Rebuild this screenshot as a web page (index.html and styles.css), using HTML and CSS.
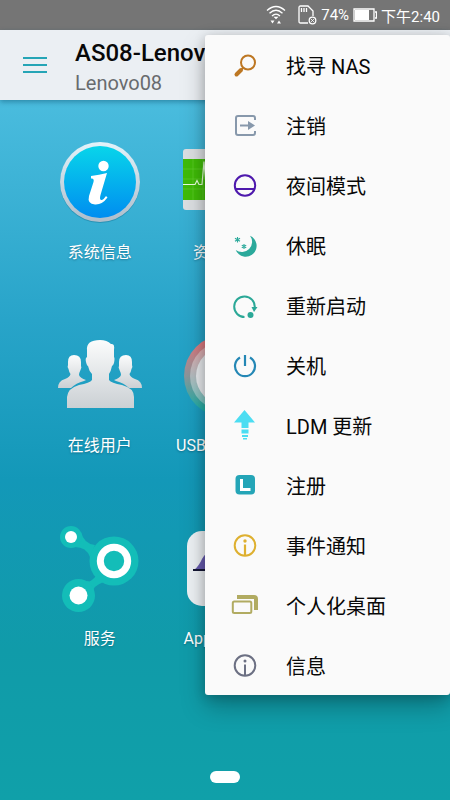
FILE: index.html
```html
<!DOCTYPE html>
<html lang="zh-CN">
<head>
  <meta charset="UTF-8" />
  <meta name="viewport" content="width=device-width, initial-scale=1.0"/>
  <title>AS08-Lenovo</title>
  <link rel="stylesheet" href="styles.css">
</head>
<body>
  <div class="status-bar">
    <svg class="wifi" width="20" height="20" viewBox="0 0 20 20" fill="none" stroke="#fff" stroke-width="1.3">
      <path d="M1 5.500Q10-2.500 19 5.500M3.500 8.300Q10 2.300 16.500 8.300M6 11Q10 7.300 14 11"/>
      <path d="M7.500 11.800h5L10 14.300zM4.500 15.500h4l-2 3zM11 18.500h4l-2-3z" fill="#fff" stroke="none"/>
    </svg>
    <svg class="sd" width="20" height="20" viewBox="0 0 20 20" fill="none" stroke="#fff" stroke-width="1.300">
      <path d="M11 18H3.500Q2 18 2 16.500V2.500Q2 1 3.500 1H11l5 5v5"/>
      <path d="M4.500 3v4M7 3v4M9.500 3v4"/>
      <circle cx="15.500" cy="15.500" r="3.300"/>
      <path d="M14.200 14.200l2.600 2.600M16.800 14.200l-2.600 2.600" stroke-width="1"/>
    </svg>
    <span>74%</span>
    <svg class="battery" width="24" height="16" viewBox="0 0 24 16">
      <path d="M1 2h20v12H1zM22 5h1.500v6H22" fill="none" stroke="#fff" stroke-width="1.300"/>
      <path d="M2 3h14v10H2z" fill="#fff"/>
    </svg>
    <span>下午2:40</span>
  </div>

  <header class="app-header">
    <button class="menu-toggle" aria-label="菜单">
      <svg width="24" height="16" viewBox="0 0 24 16"><path d="M0 1h24M0 8h24M0 15h24" stroke="#25a5b6" stroke-width="2"/></svg>
    </button>
    <div class="device">
      <h1>AS08-Lenovo08</h1>
      <p>Lenovo08</p>
    </div>
  </header>

  <main class="apps">
    <button class="app">
      <svg width="90" height="90" viewBox="0 0 90 90">
        <defs>
          <linearGradient id="ring" x2="0" y2="1"><stop stop-color="#e2f3fa"/><stop offset="1" stop-color="#aebdcb"/></linearGradient>
          <linearGradient id="blue" x2="0" y2="1"><stop stop-color="#08d5ea"/><stop offset="1" stop-color="#008df0"/></linearGradient>
        </defs>
        <circle cx="45" cy="46" r="40" fill="#17779a" opacity=".5"/>
        <circle cx="45" cy="45" r="40" fill="url(#ring)"/>
        <circle cx="45" cy="45" r="36" fill="url(#blue)"/>
        <circle cx="48.500" cy="29" r="5.200" fill="#fff"/>
        <path d="M36 39Q44 38 52 36L45.500 58Q44 63.500 47 63Q49 62 51 59L52.500 60.500Q47 68 40 67.500Q32 67 34 59L38.500 45Q39.500 41 36 41.500z" fill="#fff"/>
      </svg>
      <span>系统信息</span>
    </button>
    <button class="app">
      <svg width="90" height="90" viewBox="0 0 90 90">
        <rect x="3" y="12" width="84" height="61" rx="3" fill="#dcdfe2"/>
        <path d="M3 22h84v41H3z" fill="#3fbb08"/>
        <path d="M13 22v41M23 22v41M33 22v41M43 22v41M3 32h84M3 42h84M3 52h84" stroke="#63cf31" stroke-width=".6"/>
        <path d="M3 47.500h12l2-4 2 4h3l2-23 3 35 3-12h57" fill="none" stroke="#e6ffdb" stroke-width="1.200"/>
      </svg>
      <span>资源监控</span>
    </button>
    <button class="app app-hidden" aria-hidden="true" tabindex="-1"></button>

    <button class="app">
      <svg width="90" height="90" viewBox="0 0 90 90">
        <defs>
          <linearGradient id="people" x2="0" y2="1"><stop stop-color="#fbfcfc"/><stop offset="1" stop-color="#cbd0d4"/></linearGradient>
        </defs>
        <g fill="url(#people)" transform="translate(0 7)">
          <path d="M19 18Q26 18 26 25V29Q27 30 25.500 33Q24 36 24 38Q25 41 31 43L29 44Q21 46 16 51H3Q3 44 10 42Q15 40 15.500 37Q14 35 13.500 32Q12 30 13 28V25Q13 18 19 18z"/>
          <path d="M71 18Q64 18 64 25V29Q63 30 64.500 33Q66 36 66 38Q65 41 59 43L61 44Q69 46 74 51H87Q87 44 80 42Q75 40 74.500 37Q76 35 76.500 32Q78 30 77 28V25Q77 18 71 18z"/>
          <path d="M45 3Q52 3 56 7Q60 6 59 13V20Q60 21 59 26Q58 29 57 29Q56 34 54 37V43Q56 46 67 48Q79 51 79 60V71H12V60Q13 51 24 48Q35 46 37 43V37Q34 34 33 29Q32 29 31 25Q30 21 32 20V13Q31 3 45 3z"/>
        </g>
      </svg>
      <span>在线用户</span>
    </button>
    <button class="app">
      <svg width="90" height="90" viewBox="0 0 90 90">
        <defs>
          <linearGradient id="dial" x2="0" y2="1"><stop stop-color="#f67379"/><stop offset=".5" stop-color="#8a969b"/><stop offset="1" stop-color="#09b9ac"/></linearGradient>
        </defs>
        <circle cx="45" cy="46" r="41" fill="url(#dial)"/>
        <circle cx="45" cy="46" r="35" fill="#fff" opacity=".35"/>
        <circle cx="45" cy="46" r="29" fill="#e8ebee"/>
      </svg>
      <span>USB 外接装置</span>
    </button>
    <button class="app app-hidden" aria-hidden="true" tabindex="-1"></button>

    <button class="app">
      <svg width="90" height="90" viewBox="0 0 90 90">
        <g fill="#13bdb8">
          <path d="M26 9Q29 21 40 22L35 34Q31 23 18 24zM33 58Q35 60 41 53L49 59Q37 63 38 70L26 57Q31 59 33 58z"/>
          <circle cx="16" cy="14" r="11"/>
          <circle cx="59" cy="38" r="24.500"/>
          <circle cx="23.500" cy="72.500" r="16.500"/>
        </g>
        <circle cx="16" cy="14" r="6" fill="#fff"/>
        <circle cx="23.500" cy="72.500" r="9" fill="#fff"/>
        <circle cx="59" cy="38" r="13.700" fill="none" stroke="#fff" stroke-width="7"/>
      </svg>
      <span>服务</span>
    </button>
    <button class="app">
      <svg width="90" height="90" viewBox="0 0 90 90">
        <rect x="7" y="8" width="76" height="75" rx="15" fill="#edf1f4"/>
        <path d="M14 47Q19 43 22 36Q26 29 34 25V47H14z" fill="#675baf"/>
        <path d="M13 47h64" stroke="#151735" stroke-width="2"/>
      </svg>
      <span>App Central</span>
    </button>
    <button class="app app-hidden" aria-hidden="true" tabindex="-1"></button>
  </main>

  <nav class="dropdown">
    <button>
      <svg viewBox="0 0 30 30" fill="none" stroke="#bd7723"><circle cx="18" cy="12.500" r="7" stroke-width="2"/><path d="M13 18l-2 2" stroke-width="2"/><path d="M11 20l-4.500 4.500" stroke-width="4" stroke-linecap="round"/></svg>
      找寻 NAS
    </button>
    <button>
      <svg viewBox="0 0 30 30" fill="none" stroke="#8798ab" stroke-width="2"><path d="M25 10V8Q25 6 23 6H8Q6 6 6 8v15q0 2 2 2h15q2 0 2-2v-2M10 15.500h10"/><path d="M18 11l7 4.500-7 4.500z" fill="#8798ab" stroke="none"/></svg>
      注销
    </button>
    <button>
      <svg viewBox="0 0 30 30" fill="none" stroke="#4e19ad" stroke-width="2"><circle cx="15" cy="15.500" r="10.200"/><path d="M5.500 19h19"/></svg>
      夜间模式
    </button>
    <button>
      <svg viewBox="0 0 30 30"><path d="M20 5.700A10.900 10.900 0 1 1 5.700 20A10.200 10.200 0 0 0 20 5.700z" fill="#2ba99b"/><path d="M7.500 7v5.500M5 8.300l5 3M10 8.300l-5 3M14 14v5M11.800 15.200l4.400 2.600M16.200 15.200l-4.400 2.600" stroke="#2ba99b" stroke-width="1.100"/></svg>
      休眠
    </button>
    <button>
      <svg viewBox="0 0 30 30" fill="none" stroke="#2ba897" stroke-width="2"><path d="M14.500 27A10.300 10.300 0 1 1 24.800 17"/><path d="M21.500 17h6l-3.500 5z" fill="#2ba897" stroke="none"/><circle cx="20.500" cy="25" r="3" fill="#2ba897" stroke="none"/></svg>
      重新启动
    </button>
    <button>
      <svg viewBox="0 0 30 30" fill="none" stroke="#2487b5" stroke-width="2.200"><path d="M10 7.500A10 10 0 1 0 20 7.500M15 5v11"/></svg>
      关机
    </button>
    <button>
      <svg viewBox="0 0 30 30" fill="#4cddf2"><path d="M14.500 0L25 12.500h-6.500V18h-7v-5.500H4zM11.500 19.500h7v4h-7zM12 25h6v2h-6zM13 28h4v1.500h-4z"/></svg>
      LDM 更新
    </button>
    <button>
      <svg viewBox="0 0 30 30"><rect x="5.500" y="5" width="19.500" height="19.500" rx="4" fill="#24a5b7"/><path d="M11.500 9v10.500h9" fill="none" stroke="#fff" stroke-width="3"/></svg>
      注册
    </button>
    <button>
      <svg viewBox="0 0 30 30"><circle cx="15" cy="15.500" r="10.300" fill="none" stroke="#deb030" stroke-width="2"/><circle cx="15" cy="11" r="1.700" fill="#deb030"/><path d="M15 14.500v11" stroke="#deb030" stroke-width="2.200"/></svg>
      事件通知
    </button>
    <button>
      <svg viewBox="0 0 30 30" fill="none" stroke="#b1ab61"><path d="M7 7h17q2 0 2 2v11" stroke-width="4"/><rect x="2.800" y="11.500" width="18.500" height="11.500" rx="1.500" fill="#fafafa" stroke-width="2"/></svg>
      个人化桌面
    </button>
    <button>
      <svg viewBox="0 0 30 30"><circle cx="15" cy="15.500" r="10.300" fill="none" stroke="#6c7083" stroke-width="2"/><circle cx="15" cy="11" r="1.500" fill="#6c7083"/><path d="M15 14.500v11" stroke="#6c7083" stroke-width="2"/></svg>
      信息
    </button>
  </nav>

  <footer class="pager"><span></span></footer>
</body>
</html>
```

FILE: styles.css
```css
* {
  box-sizing: border-box;
}

body {
  margin: 0;
  min-height: 100vh;
  position: relative;
  overflow-x: hidden;
  display: flex;
  flex-direction: column;
  font-family: Roboto, "Noto Sans CJK SC", sans-serif;
  background: linear-gradient(#4abcde 100px, #28a4c9 320px, #1398b8 480px, #109ba9 650px, #10a0a9);
}

button {
  border: none;
  padding: 0;
  background: none;
  font-family: inherit;
  cursor: pointer;
}

.status-bar {
  height: 30px;
  padding-right: 10px;
  display: flex;
  align-items: center;
  justify-content: flex-end;
  background: #757575;
  color: #fff;
  font-size: 15px;
}

.wifi {
  margin-right: 11px;
}

.sd {
  margin-right: 4px;
}

.battery {
  margin: 0 4px;
}

.app-header {
  height: 70px;
  padding-left: 23px;
  display: flex;
  align-items: center;
  gap: 28px;
  background: #ebeff3;
  box-shadow: 0 2px 5px rgba(0, 60, 90, 0.4);
}

.menu-toggle {
  height: 40px;
}

.menu-toggle svg {
  display: block;
}

.device {
  padding-top: 4px;
}

.device h1,
.device p {
  margin: 0;
  white-space: nowrap;
}

.device h1 {
  color: #080808;
  font-size: 24px;
  font-weight: 500;
  line-height: 32px;
}

.device p {
  color: #686b6e;
  font-size: 20px;
  line-height: 28px;
}

.apps {
  flex: 1;
  display: grid;
  grid-template-columns: repeat(3, 1fr);
  align-content: start;
  row-gap: 65px;
  padding: 37px 37px 0;
}

.app {
  display: flex;
  flex-direction: column;
  align-items: center;
  gap: 14px;
  color: #fff;
  font-size: 16px;
  line-height: 24px;
  white-space: nowrap;
  text-shadow: 0 1px 2px rgba(0, 50, 70, 0.4);
}

.app-hidden {
  visibility: hidden;
}

/* menu opens over the header and the app grid */
.dropdown {
  position: absolute;
  top: 35px;
  right: 0;
  width: 245px;
  display: flex;
  flex-direction: column;
  background: #fafafa;
  border-radius: 3px;
  box-shadow: 0 12px 24px rgba(0, 0, 0, 0.25), 0 2px 12px rgba(0, 0, 0, 0.2);
}

.dropdown button {
  height: 60px;
  padding-left: 25px;
  display: flex;
  align-items: center;
  gap: 26px;
  color: #080808;
  font-size: 20px;
}

.dropdown svg {
  width: 30px;
  height: 30px;
}

.pager {
  display: flex;
  justify-content: center;
  padding-bottom: 17px;
}

.pager span {
  width: 30px;
  height: 12px;
  border-radius: 6px;
  background: #fff;
}
```
